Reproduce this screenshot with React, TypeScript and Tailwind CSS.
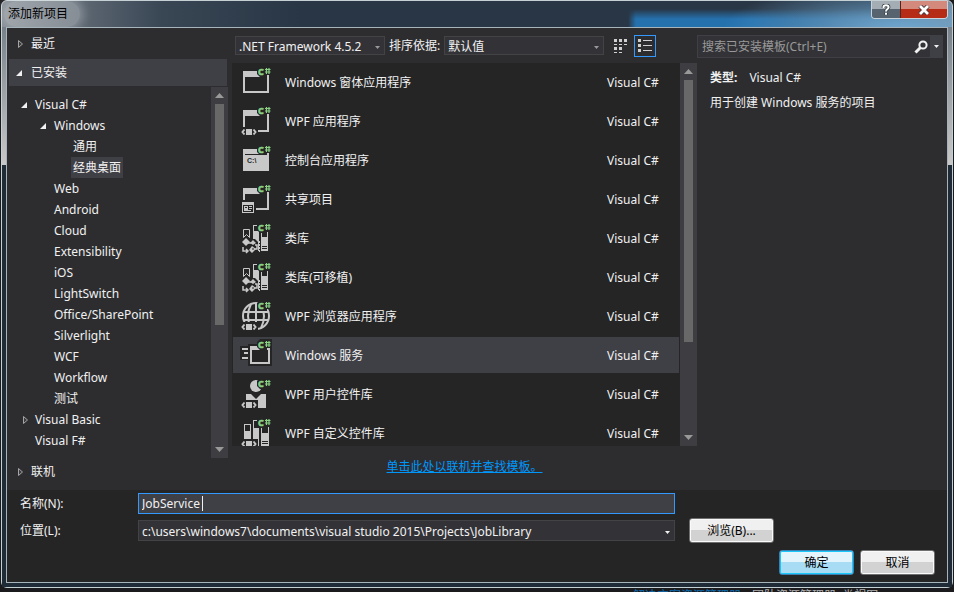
import { useState } from "react";
import type { ReactNode } from "react";
import clsx from "clsx";

type IconName = "window" | "wpf" | "console" | "shared" | "library" | "browser" | "service" | "userControl" | "customControl";

const templates: { name: string; icon: IconName }[] = [
  { name: "Windows 窗体应用程序", icon: "window" },
  { name: "WPF 应用程序", icon: "wpf" },
  { name: "控制台应用程序", icon: "console" },
  { name: "共享项目", icon: "shared" },
  { name: "类库", icon: "library" },
  { name: "类库(可移植)", icon: "library" },
  { name: "WPF 浏览器应用程序", icon: "browser" },
  { name: "Windows 服务", icon: "service" },
  { name: "WPF 用户控件库", icon: "userControl" },
  { name: "WPF 自定义控件库", icon: "customControl" },
];

const tree: { label: string; level: 0 | 1 | 2; state?: "open" | "closed" }[] = [
  { label: "Visual C#", level: 0, state: "open" },
  { label: "Windows", level: 1, state: "open" },
  { label: "通用", level: 2 },
  { label: "经典桌面", level: 2 },
  { label: "Web", level: 1 },
  { label: "Android", level: 1 },
  { label: "Cloud", level: 1 },
  { label: "Extensibility", level: 1 },
  { label: "iOS", level: 1 },
  { label: "LightSwitch", level: 1 },
  { label: "Office/SharePoint", level: 1 },
  { label: "Silverlight", level: 1 },
  { label: "WCF", level: 1 },
  { label: "Workflow", level: 1 },
  { label: "测试", level: 1 },
  { label: "Visual Basic", level: 0, state: "closed" },
  { label: "Visual F#", level: 0 },
];

const indent = { 0: "pl-[9px]", 1: "pl-7", 2: "pl-[62px]" };

function Expander({ state }: { state?: "open" | "closed" }) {
  return (
    <svg className="h-3 w-3 shrink-0" viewBox="0 0 12 12" aria-hidden="true">
      {state === "open" && <path d="M9 3v6H3z" fill="#f1f1f1" />}
      {state === "closed" && <path d="M5.500 2.500v7L9.500 6z" fill="#3c3c3f" stroke="#a5a5a5" />}
    </svg>
  );
}

function CodeGlyph() {
  return (
    <g>
      <path d="M0 22h18v10H0z" fill="#252526" />
      <path d="M4.500 24.500 2.500 27l2 2.500M13.500 24.500l2 2.500-2 2.500" fill="none" stroke="#c8c8c8" strokeWidth="2" />
      <path d="M6 24h6v6H6z" fill="#c8c8c8" />
    </g>
  );
}

function Blocks() {
  return (
    <g>
      <path d="M1 17h14l3 3v10H1z" fill="#252526" />
      <path d="m6 16 4 4-4 4-4-4zM13 18l3 3-3 2-3-2zM12 24l4 3-4 4-3-3z" fill="#c8c8c8" />
      <path d="M3 25v4h5M6 27l2 2-2 2M8 21h3M15 23h2v4h-2" fill="none" stroke="#c8c8c8" strokeWidth="1.500" />
      <path d="M12 26.500h2v1h-2z" fill="#252526" />
    </g>
  );
}

const artwork: Record<IconName, ReactNode> = {
  window: <path fillRule="evenodd" d="M3 5h26v22H3zM5 11v14h22V11z" />,
  wpf: (
    <>
      <path fillRule="evenodd" d="M3 5h26v22H3zM5 11v14h22V11z" />
      <CodeGlyph />
    </>
  ),
  console: (
    <>
      <path d="M3 5h26v22H3z" />
      <path d="M5 10h22v1H5z" fill="#252526" />
      <text x="7" y="19" fontSize="7" fontWeight="700" fontFamily="Liberation Sans, sans-serif" fill="#252526">C:\</text>
    </>
  ),
  shared: (
    <>
      <path fillRule="evenodd" d="M3 5h26v22H3zM5 11v14h22V11z" />
      <path d="M1 17h15v15H1z" fill="#252526" />
      <path d="M2 19h12v11H2z" />
      <path d="M3 22h10v7H3z" fill="#252526" />
      <path d="M4 23h4v4H4zM9 23h3v1H9zM9 25h3v1H9zM4 27h7v1H4z" />
      <path d="M5 24h2v1H5z" fill="#252526" />
    </>
  ),
  library: (
    <>
      <path d="M3.500 7.500h6v8l-3-3-3 3z" fill="none" stroke="#c8c8c8" />
      <path fillRule="evenodd" d="M13 3h6v26h-6zM14 4v5h5V4z" />
      <path fillRule="evenodd" d="M21 10h7v19h-7zM22 10v5h5v-5zM22 24v1h5v-1zM22 26v1h5v-1z" />
      <path d="M19.500 19v11" stroke="#c8c8c8" strokeDasharray="2 1" />
      <Blocks />
    </>
  ),
  browser: (
    <>
      <g fill="none" stroke="#c8c8c8" strokeWidth="2">
        <circle cx="16" cy="16" r="13" />
        <path d="M3 12h26M3 20h26M11 4C7 12 7 20 11 28M16 3v26M21 4c4 8 4 16 0 24" />
      </g>
      <CodeGlyph />
    </>
  ),
  service: (
    <>
      <path d="M0 7h8V5h24v22H8v-6H0z" fill="#252526" />
      <path d="M2 9h6v2H2zM4 13h4v2H4zM2 18h6v2H2z" />
      <path fillRule="evenodd" d="M10 7h20v18H10zM12 11v12h16V11z" />
    </>
  ),
  userControl: (
    <>
      <circle cx="16" cy="8" r="6" />
      <path d="M6 16h5l5 5 5-5h5v14H6z" />
      <CodeGlyph />
    </>
  ),
  customControl: (
    <>
      <path fillRule="evenodd" d="M4 7h7v15H4zM5 8v6h5V8z" />
      <path fillRule="evenodd" d="M13 3h6v27h-6zM14 4v7h5V4z" />
      <path fillRule="evenodd" d="M21 10h8v20h-8zM22 10v6h6v-6zM22 24v1h6v-1zM22 26v1h6v-1z" />
      <CodeGlyph />
    </>
  ),
};

function TemplateIcon({ name }: { name: IconName }) {
  return (
    <svg className="h-8 w-8 shrink-0 overflow-visible" viewBox="0 0 32 32" fill="#c8c8c8" aria-hidden="true">
      {artwork[name]}
      <path d="M20 0h12v9h-5v2h-7l-3-3V3z" fill="#252526" />
      <text x="18" y="9" fontSize="9" fontWeight="700" fontFamily="Open Sans, sans-serif" fill="#89d185" stroke="#89d185" strokeWidth="0.600">C</text>
      <path d="M26.500 2v6M29 2v6M25 3.500h5.500M25 6h5.500" stroke="#89d185" strokeWidth="1.200" />
    </svg>
  );
}

function Scrollbar({ thumb }: { thumb: string }) {
  return (
    <div className="flex w-[17px] shrink-0 flex-col items-center bg-[#3e3e42] pt-[6px] pb-[6px]" aria-hidden="true">
      <svg className="h-[5px] w-[9px] shrink-0" viewBox="0 0 9 5"><path d="M4.500 0 9 5H0z" fill="#999" /></svg>
      <div className="flex w-[9px] flex-1 flex-col pt-[6px]"><div className={clsx("bg-[#686868]", thumb)} /></div>
      <svg className="h-[5px] w-[9px] shrink-0" viewBox="0 0 9 5"><path d="M4.500 5 9 0H0z" fill="#999" /></svg>
    </div>
  );
}

function Dropdown({ id, label, value, className, arrow = "#999999" }: { id: string; label?: string; value: string; className?: string; arrow?: string }) {
  return (
    <div className={clsx("relative border border-[#434346] bg-[#333337]", className)}>
      <select id={id} aria-label={label} className="block h-full w-full appearance-none bg-transparent pt-[2px] pr-4 pl-[3px] outline-none" defaultValue={value}>
        <option>{value}</option>
      </select>
      <svg className="pointer-events-none absolute top-1/2 right-1 h-[3px] w-[5px]" viewBox="0 0 5 3"><path d="M0 0h5L2.500 3z" fill={arrow} /></svg>
    </div>
  );
}

function DialogButton({ children, primary, className }: { children: ReactNode; primary?: boolean; className?: string }) {
  return (
    <button
      type="button"
      className={clsx(
        "h-[25px] shrink-0 rounded-[3px] border text-black",
        primary
          ? "border-[#3c7fb1] bg-linear-to-b from-[#e3f4fc] from-50% to-[#a8dcf5] to-50% shadow-[inset_0_0_0_1px_#18c8fb]"
          : "border-[#707070] bg-linear-to-b from-[#f0f0f0] from-50% to-[#d2d2d2] to-50% shadow-[inset_0_0_0_1px_#fafafa]",
        className,
      )}
    >
      {children}
    </button>
  );
}

function TitleBar() {
  return (
    <header className="flex h-[26px] shrink-0 items-start justify-between pr-1 pl-[2px]">
      <h1 className="rounded-full bg-white/25 px-1 pr-3 leading-[26px] text-black shadow-[0_0_10px_4px_rgba(255,255,255,0.25)]">添加新项目</h1>
      <div className="flex h-[18px] overflow-hidden rounded-b-[4px] border border-t-0 border-[#c9d2da]">
        <button type="button" aria-label="帮助" className="flex w-7 items-center justify-center bg-linear-to-b from-[#a4adb4] from-50% to-[#57636e] to-50%">
          <svg className="h-3 w-3" viewBox="0 0 12 12"><path d="M3.500 4V3c0-1.200 1-1.800 2.500-1.800S8.600 2 8.600 3.300C8.600 5 6 5 6 7.400M6 8.800v2" fill="none" stroke="#353f48" strokeWidth="3.600" /><path d="M3.500 4V3c0-1.200 1-1.800 2.500-1.800S8.600 2 8.600 3.300C8.600 5 6 5 6 7.400M6 8.800v2" fill="none" stroke="#fff" strokeWidth="2" /></svg>
        </button>
        <button type="button" aria-label="关闭" className="flex w-[47px] items-center justify-center border-l border-[#5d2019] bg-linear-to-b from-[#d38a7c] from-50% to-[#b62b16] to-50%">
          <svg className="h-[10px] w-3" viewBox="0 0 12 10"><path d="m2 1 8 8M10 1 2 9" stroke="#46363a" strokeWidth="4.500" /><path d="m2 1 8 8M10 1 2 9" stroke="#fff" strokeWidth="2.800" /></svg>
        </button>
      </div>
    </header>
  );
}

function CategoryPane() {
  const [category, setCategory] = useState("经典桌面");
  return (
    <nav className="flex w-[221px] shrink-0 flex-col pl-[2px]">
      <button type="button" className="flex h-[31px] shrink-0 items-center gap-[6px] pl-1"><Expander state="closed" />最近</button>
      <button type="button" className="mr-px mb-px flex h-[27px] shrink-0 items-center gap-[6px] bg-[#3f3f46] pl-1"><Expander state="open" />已安装</button>
      <div className="flex h-[371px] min-h-0">
        <ul className="flex-1 overflow-hidden pt-[7px]">
          {tree.map((node) => (
            <li key={node.label} className={clsx("flex h-[21px] items-center", indent[node.level])}>
              <button type="button" onClick={() => setCategory(node.label)} className="flex h-full items-center gap-[3px]">
                {node.level < 2 && <Expander state={node.state} />}
                <span className={clsx("px-[2px] leading-[21px]", category === node.label && "bg-[#3f3f46]")}>{node.label}</span>
              </button>
            </li>
          ))}
        </ul>
        <Scrollbar thumb="h-[221px]" />
      </div>
      <button type="button" className="flex h-[27px] shrink-0 items-center gap-[6px] pl-1"><Expander state="closed" />联机</button>
    </nav>
  );
}

function Toolbar() {
  return (
    <div className="flex h-[35px] shrink-0 items-center pl-[3px]">
      <Dropdown id="framework" label="目标框架" value=".NET Framework 4.5.2" className="h-[19px] w-[150px]" />
      <label htmlFor="sort" className="mx-1 whitespace-nowrap">排序依据:</label>
      <Dropdown id="sort" value="默认值" className="h-[19px] w-40" />
      <button type="button" aria-label="小图标" className="mr-[2px] ml-[6px] flex h-[22px] w-[22px] items-center justify-center">
        <svg className="h-[14px] w-[14px]" viewBox="0 0 14 14" fill="#d0d0d0"><path d="M0 0h3v3H0zM5 0h3v3H5zM10 0h3v3h-3zM0 5h3v1H0zM5 5h3v1H5zM10 5h3v1h-3zM0 8h3v3H0zM5 8h3v3H5zM0 13h3v1H0zM5 13h3v1H5z" /></svg>
      </button>
      <button type="button" aria-label="列表" className="flex h-[22px] w-[22px] items-center justify-center border border-[#3399ff]">
        <svg className="h-[13px] w-[14px]" viewBox="0 0 14 13" fill="#d0d0d0"><path d="M0 0h3v3H0zM0 5h3v3H0zM0 10h3v3H0zM5 1h9v1H5zM5 6h9v1H5zM5 11h9v1H5z" /></svg>
      </button>
    </div>
  );
}

function TemplateList() {
  const [selected, setSelected] = useState("Windows 服务");
  return (
    <div className="flex h-[383px] bg-[#252526]">
      <ul className="flex min-w-0 flex-1 flex-col gap-[3px] overflow-hidden p-px">
        {templates.map(({ name, icon }) => (
          <li key={name}>
            <button
              type="button"
              onClick={() => setSelected(name)}
              className={clsx("flex h-9 w-full items-center pr-[18px] pl-[7px] text-left", selected === name && "bg-[#3f3f46]")}
            >
              <TemplateIcon name={icon} />
              <span className="ml-[13px] flex-1 pt-[2px]">{name}</span>
              <span className="w-[54px] pt-[2px]">Visual C#</span>
            </button>
          </li>
        ))}
      </ul>
      <Scrollbar thumb="h-[262px]" />
    </div>
  );
}

function DetailsPane() {
  return (
    <aside className="w-[250px] shrink-0 pr-1">
      <div className="mt-[7px] flex h-[23px] items-center border border-[#3f3f46] bg-[#333337]">
        <input type="search" aria-label="搜索已安装模板" placeholder="搜索已安装模板(Ctrl+E)" className="min-w-0 flex-1 bg-transparent pl-1 outline-none placeholder:text-[#999999]" />
        <button type="button" aria-label="搜索" className="mr-[2px] flex h-full items-center">
          <svg className="h-[14px] w-[14px]" viewBox="0 0 14 14" fill="none" stroke="#f1f1f1"><circle cx="9" cy="5" r="3.600" strokeWidth="2" /><path d="m6.500 7.500-5 5" strokeWidth="3" /></svg>
        </button>
        <button type="button" aria-label="搜索选项" className="flex h-full w-3 items-center justify-center bg-[#3f3f46]">
          <svg className="h-[3px] w-[5px]" viewBox="0 0 5 3"><path d="M0 0h5L2.500 3z" fill="#f1f1f1" /></svg>
        </button>
      </div>
      <dl className="mt-[11px] ml-[13px] flex gap-3 leading-[18px]">
        <dt className="font-bold">类型:</dt>
        <dd>Visual C#</dd>
      </dl>
      <p className="mt-[7px] ml-[13px] leading-[18px]">用于创建 Windows 服务的项目</p>
    </aside>
  );
}

function ProjectForm() {
  return (
    <form className="flex flex-1 flex-col bg-[#252526] pt-[3px] pr-3 pl-[13px]">
      <div className="flex items-center">
        <label htmlFor="project-name" className="w-[118px] shrink-0">名称(N):</label>
        <div className="relative mr-[260px] flex-1">
          <input id="project-name" defaultValue="JobService" className="block h-[21px] w-full border border-[#3399ff] bg-[#3f3f46] px-[3px] caret-transparent outline-none" />
          <span className="absolute top-[3px] left-16 h-[15px] w-px bg-[#f1f1f1]" />
        </div>
      </div>
      <div className="mt-1 flex h-[25px] items-center">
        <label htmlFor="location" className="w-[118px] shrink-0">位置(L):</label>
        <Dropdown id="location" value="c:\users\windows7\documents\visual studio 2015\Projects\JobLibrary" className="h-[21px] flex-1" arrow="#f1f1f1" />
        <DialogButton className="mr-[161px] ml-[14px] w-[85px]">浏览(B)...</DialogButton>
      </div>
      <div className="mt-[7px] flex justify-end gap-[6px]">
        <DialogButton primary className="w-[75px]">确定</DialogButton>
        <DialogButton className="w-[75px]">取消</DialogButton>
      </div>
    </form>
  );
}

export default function App() {
  return (
    <div className="flex h-screen flex-col overflow-hidden bg-[#1b1b1e] px-px font-['Noto_Sans','Noto_Sans_CJK_SC',sans-serif] text-[12px] leading-4 text-[#f1f1f1]">
      <section className="flex min-h-0 flex-1 flex-col rounded-[6px] border border-[#c5d0d4] bg-[radial-gradient(ellipse_180px_50px_at_900px_30px,#70a9d3,transparent),linear-gradient(#293645_8px,transparent_18px),linear-gradient(90deg,transparent_626px,#2471ae_634px,#2471ae_750px,transparent_950px),linear-gradient(90deg,#808890,#394654_160px,#293645_300px,#293645_780px,#78838d)] bg-[length:100%_26px,320px_26px,100%_26px,100%_26px] bg-[position:0_0,626px_0,0_0,0_0] bg-no-repeat">
        <TitleBar />
        <div className="flex min-h-0 flex-1 px-1 pb-1 [background:linear-gradient(#77818a,#c8c8c8_138px,#202b38_138px)]">
          <div className="flex min-w-0 flex-1 flex-col border border-[#a7b4bc] bg-[#2d2d30]">
            <main className="flex h-[462px] shrink-0">
              <CategoryPane />
              <div className="ml-1 flex min-w-0 flex-1 flex-col">
                <Toolbar />
                <TemplateList />
                <a href="#online" className="mt-[13px] self-center text-[#0097fb] underline">单击此处以联机并查找模板。</a>
              </div>
              <DetailsPane />
            </main>
            <ProjectForm />
          </div>
        </div>
      </section>
      <footer className="flex h-1 shrink-0 gap-[11px] overflow-hidden pl-[632px] leading-4 whitespace-nowrap">
        <span className="text-[#0b6cae]">解决方案资源管理器</span>
        <span className="text-[#b0b0b0]">团队资源管理器&nbsp; 类视图</span>
      </footer>
    </div>
  );
}
